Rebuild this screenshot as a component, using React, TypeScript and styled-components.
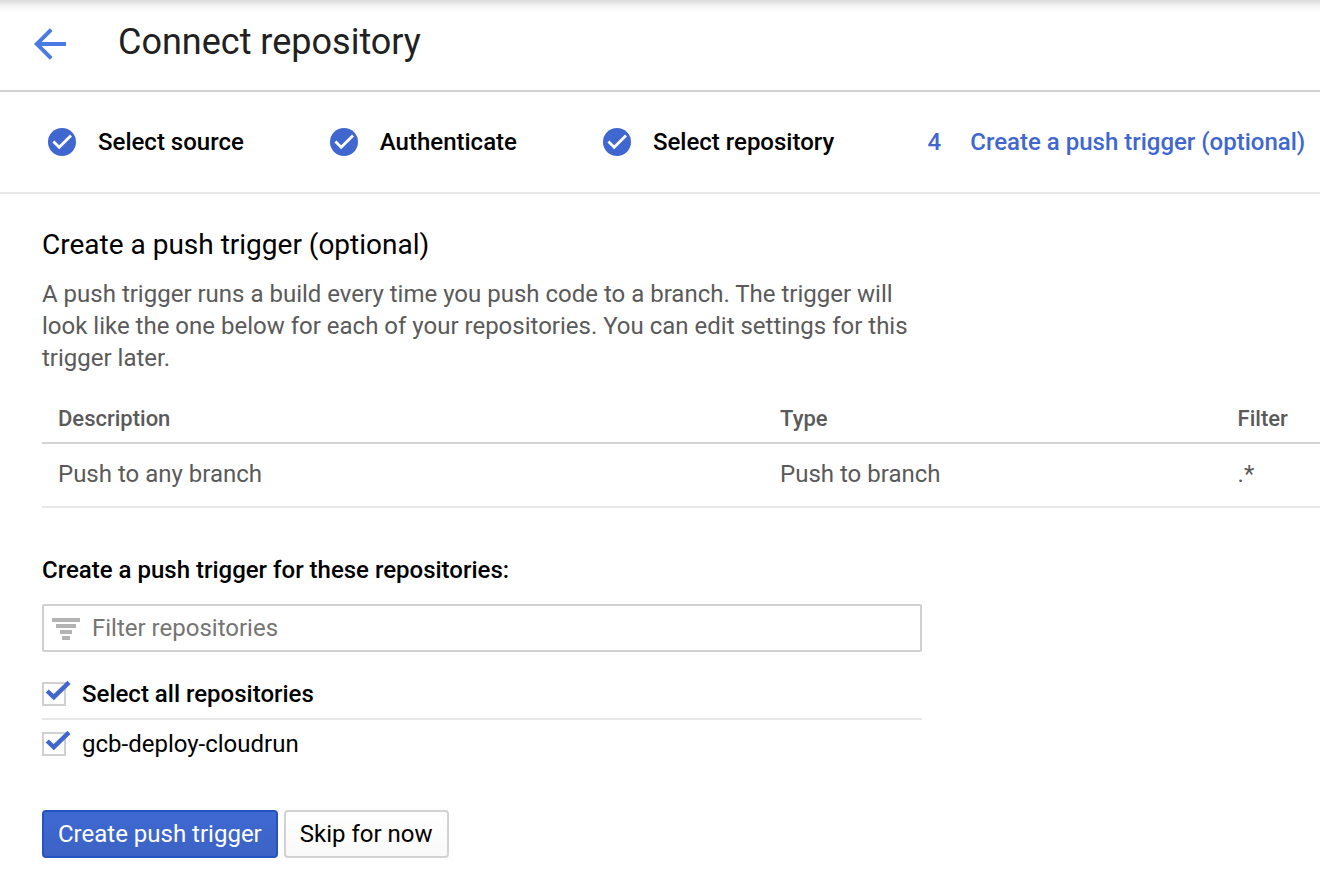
import React, { useState } from 'react';
import styled, { createGlobalStyle } from 'styled-components';

const blue = '#3f67cf';

const GlobalStyle = createGlobalStyle`
  *, *::before, *::after { box-sizing: border-box; }
  body {
    margin: 0;
    background: #fff;
    color: #000;
    font-family: Roboto, "Liberation Sans", sans-serif;
    font-size: 24px;
    line-height: 32px;
    overflow-x: hidden;
  }
`;

const Header = styled.header`
  display: flex;
  align-items: center;
  gap: 52px;
  height: 92px;
  padding: 0 34px 2px;
  border-bottom: 2px solid #d2d2d2;
  background: linear-gradient(#dadada, #f4f4f4 6px, #fff 12px);
`;

const BackLink = styled.a`
  display: flex;
  color: #4a7ae4;
`;

const Title = styled.h1`
  margin: 0;
  padding-bottom: 4px;
  font-size: 36px;
  line-height: 40px;
  font-weight: 400;
  color: #212121;
`;

const Steps = styled.ol`
  display: flex;
  align-items: center;
  gap: 86px;
  height: 102px;
  margin: 0;
  padding: 0 48px;
  list-style: none;
  border-bottom: 2px solid #e7e7e7;
`;

const Step = styled.li<{ $current?: boolean }>`
  display: flex;
  align-items: center;
  gap: 22px;
  flex: none;
  font-weight: 500;
  color: ${(p) => (p.$current ? blue : '#000')};
`;

const Marker = styled.span`
  display: flex;
  justify-content: center;
  width: 28px;
`;

const Main = styled.main`
  padding: 32px 0 28px 42px;
`;

const Heading = styled.h2`
  margin: 0 0 14px;
  font-size: 28px;
  line-height: 38px;
  font-weight: 400;
`;

const Intro = styled.p`
  max-width: 880px;
  margin: 0 0 28px;
  color: #5a5a5a;
`;

const Table = styled.table`
  width: 100%;
  table-layout: fixed;
  border-collapse: separate;
  border-spacing: 0;
  color: #5a5a5a;
  text-align: left;
`;

const HeadCell = styled.th<{ $width?: string }>`
  width: ${(p) => p.$width ?? 'auto'};
  padding: 0 0 6px 16px;
  font-size: 22px;
  line-height: 34px;
  font-weight: 500;
  border-bottom: 2px solid #d4d4d4;
`;

const Cell = styled.td`
  padding: 14px 0 16px 16px;
  border-bottom: 2px solid #e7e7e7;
`;

const Form = styled.form`
  max-width: 880px;
  margin-top: 46px;
`;

const FormTitle = styled.h3`
  margin: 0 0 18px;
  font-size: 24px;
  font-weight: 500;
`;

const FilterBox = styled.label`
  display: flex;
  align-items: center;
  gap: 12px;
  height: 48px;
  margin-bottom: 18px;
  padding: 0 8px;
  border: 2px solid #d0d0d0;
  border-radius: 2px;
`;

const FilterInput = styled.input`
  flex: 1;
  min-width: 0;
  padding: 0;
  border: 0;
  outline: 0;
  background: none;
  font: inherit;
  color: #000;
  &::placeholder { color: #757575; opacity: 1; }
`;

const RepoRow = styled.label<{ $all?: boolean }>`
  display: flex;
  align-items: center;
  gap: 16px;
  padding: 8px 0;
  font-weight: ${(p) => (p.$all ? 500 : 400)};
  border-bottom: ${(p) => (p.$all ? '2px solid #e7e7e7' : '0')};
`;

const CheckFrame = styled.span`
  position: relative;
  display: flex;
  width: 24px;
  height: 24px;
`;

const CheckInput = styled.input`
  appearance: none;
  width: 24px;
  height: 24px;
  margin: 0;
  border: 2px solid #d0d0d0;
  background: #fff;
  & + svg { display: none; }
  &:checked + svg { display: block; }
`;

const CheckMark = styled.svg`
  position: absolute;
  left: 0;
  bottom: 0;
  pointer-events: none;
`;

const Actions = styled.div`
  display: flex;
  gap: 6px;
  margin-top: 42px;
`;

const Button = styled.button<{ $primary?: boolean }>`
  height: 48px;
  padding: 0 14px;
  border: 2px solid ${(p) => (p.$primary ? '#2653c4' : '#d2d2d2')};
  border-radius: 4px;
  background: ${(p) =>
    p.$primary ? 'linear-gradient(#3f69d3, #3c63c4)' : 'linear-gradient(#fff, #f9f9f9)'};
  color: ${(p) => (p.$primary ? '#fff' : '#000')};
  font: inherit;
  white-space: nowrap;
`;

const BackArrow = () => (
  <svg width="32" height="32" viewBox="0 0 32 32" fill="none" stroke="currentColor" strokeWidth="4" aria-hidden="true">
    <path d="M17.2 1.6 2.8 16 17.2 30.4M3 16H32" />
  </svg>
);

const DoneIcon = () => (
  <svg width="28" height="28" viewBox="0 0 28 28" aria-hidden="true">
    <circle cx="14" cy="14" r="14" fill={blue} />
    <path d="M5.4 13.6 11.2 19.2 23 7.6" fill="none" stroke="#fff" strokeWidth="2.8" />
  </svg>
);

const FilterIcon = () => (
  <svg width="28" height="24" viewBox="0 0 28 24" fill="#b3b3b3" aria-hidden="true">
    <path d="M0 2h28v4H0zM4 8h20v4H4zM8 14h12v4H8zM10 20h8v4h-8z" />
  </svg>
);

type CheckboxProps = { checked: boolean; onChange: (value: boolean) => void };

const Checkbox = ({ checked, onChange }: CheckboxProps) => (
  <CheckFrame>
    <CheckInput type="checkbox" checked={checked} onChange={(e) => onChange(e.target.checked)} />
    <CheckMark width="30" height="26" viewBox="0 0 30 26" fill="none" stroke={blue} strokeWidth="4.4" aria-hidden="true">
      <path d="M5.2 11 11.8 17.2 27 2.4" />
    </CheckMark>
  </CheckFrame>
);

const doneSteps = ['Select source', 'Authenticate', 'Select repository'];
const repositories = ['gcb-deploy-cloudrun'];

export default function App() {
  const [filter, setFilter] = useState('');
  const [selected, setSelected] = useState<string[]>(repositories);
  const visible = repositories.filter((name) => name.includes(filter));

  const toggle = (name: string, on: boolean) =>
    setSelected((prev) => (on ? [...prev, name] : prev.filter((n) => n !== name)));

  return (
    <>
      <GlobalStyle />
      <Header>
        <BackLink href="#back" aria-label="Back">
          <BackArrow />
        </BackLink>
        <Title>Connect repository</Title>
      </Header>
      <Steps>
        {doneSteps.map((label) => (
          <Step key={label}>
            <Marker>
              <DoneIcon />
            </Marker>
            {label}
          </Step>
        ))}
        <Step $current aria-current="step">
          <Marker>4</Marker>
          Create a push trigger (optional)
        </Step>
      </Steps>
      <Main>
        <Heading>Create a push trigger (optional)</Heading>
        <Intro>
          A push trigger runs a build every time you push code to a branch. The trigger will look like
          the one below for each of your repositories. You can edit settings for this trigger later.
        </Intro>
        <Table>
          <thead>
            <tr>
              <HeadCell $width="56.5%">Description</HeadCell>
              <HeadCell $width="35.8%">Type</HeadCell>
              <HeadCell>Filter</HeadCell>
            </tr>
          </thead>
          <tbody>
            <tr>
              <Cell>Push to any branch</Cell>
              <Cell>Push to branch</Cell>
              <Cell>.*</Cell>
            </tr>
          </tbody>
        </Table>
        <Form onSubmit={(e) => e.preventDefault()}>
          <FormTitle>Create a push trigger for these repositories:</FormTitle>
          <FilterBox>
            <FilterIcon />
            <FilterInput
              type="text"
              placeholder="Filter repositories"
              aria-label="Filter repositories"
              value={filter}
              onChange={(e) => setFilter(e.target.value)}
            />
          </FilterBox>
          <RepoRow $all>
            <Checkbox
              checked={selected.length === repositories.length}
              onChange={(on) => setSelected(on ? repositories : [])}
            />
            Select all repositories
          </RepoRow>
          {visible.map((name) => (
            <RepoRow key={name}>
              <Checkbox checked={selected.includes(name)} onChange={(on) => toggle(name, on)} />
              {name}
            </RepoRow>
          ))}
          <Actions>
            <Button type="submit" $primary>
              Create push trigger
            </Button>
            <Button type="button">Skip for now</Button>
          </Actions>
        </Form>
      </Main>
    </>
  );
}
